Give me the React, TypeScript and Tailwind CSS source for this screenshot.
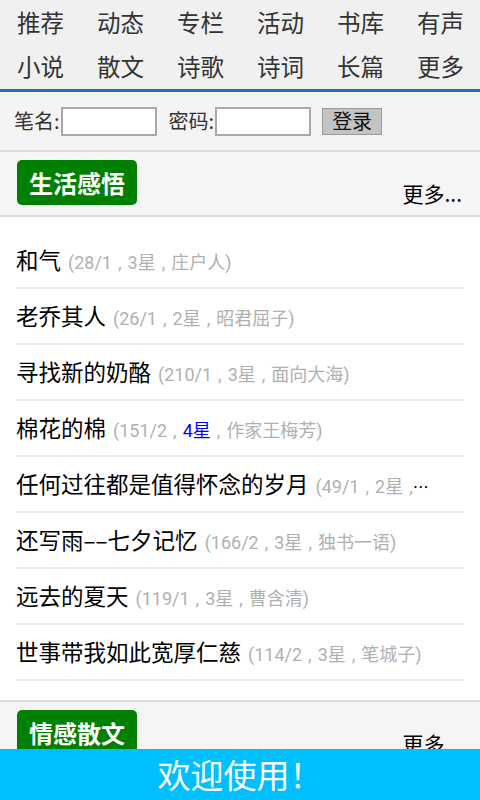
import React from "react";

type Article = {
  title: string;
  views: string;
  stars: string;
  author: string;
  hot?: boolean;
};

const NAV_ROWS: string[][] = [
  ["推荐", "动态", "专栏", "活动", "书库", "有声"],
  ["小说", "散文", "诗歌", "诗词", "长篇", "更多"],
];

const ARTICLES: Article[] = [
  { title: "和气", views: "28/1", stars: "3星", author: "庄户人" },
  { title: "老乔其人", views: "26/1", stars: "2星", author: "昭君屈子" },
  { title: "寻找新的奶酪", views: "210/1", stars: "3星", author: "面向大海" },
  { title: "棉花的棉", views: "151/2", stars: "4星", author: "作家王梅芳", hot: true },
  { title: "任何过往都是值得怀念的岁月", views: "49/1", stars: "2星", author: "夜雨寄北" },
  { title: "还写雨––七夕记忆", views: "166/2", stars: "3星", author: "独书一语" },
  { title: "远去的夏天", views: "119/1", stars: "3星", author: "曹含清" },
  { title: "世事带我如此宽厚仁慈", views: "114/2", stars: "3星", author: "笔城子" },
];

const CJK = "font-['Noto_Sans_CJK_SC',sans-serif]";
const META = "font-['Roboto','Noto_Sans_CJK_SC',sans-serif]";

function SectionHeader({ label }: { label: string }) {
  return (
    <div className="flex items-end justify-between bg-[#f5f5f5] pt-2 pb-[10px] pl-[17px] pr-[18px] border-t-2 border-[#dcdcdc]">
      <div className="h-[45px] w-[120px] rounded-[5px] bg-[#008000] flex items-center justify-center text-white text-[24px] font-bold leading-none">
        {label}
      </div>
      <div className="text-[21px] leading-none text-black pb-[1px]">更多...</div>
    </div>
  );
}

// comma in the meta line sits with a wide gap on both sides
const Sep = () => <span className="mx-[6px]">,</span>;

function ArticleRow({ item }: { item: Article }) {
  return (
    <div className="h-[56px] border-b-2 border-[#ececec] flex items-center">
      <div className="truncate w-[420px]">
        <span className="text-[22.5px] text-black">{item.title}</span>
        <span className={`${META} text-[18px] text-[#b0b0b0] ml-[7px]`}>
          ({item.views}
          <Sep />
          <span className={item.hot ? "text-[#0000ff]" : ""}>{item.stars}</span>
          <Sep />
          {item.author})
        </span>
      </div>
    </div>
  );
}

export default function App() {
  return (
    <div className={`${CJK} w-[480px] min-h-[800px] bg-[#f5f5f5] relative overflow-hidden`}>
      <nav className="bg-[#f0f0f0] pl-[17px] pt-[1px] border-b-[3px] border-[#1e6ec8]">
        {NAV_ROWS.map((row, i) => (
          <div key={i} className="grid grid-cols-[repeat(6,80px)] h-[44px] items-center">
            {row.map((name) => (
              <span key={name} className="text-[23.5px] text-[#333] leading-none">
                {name}
              </span>
            ))}
          </div>
        ))}
      </nav>

      <div className="bg-[#f4f4f4] h-[58px] flex items-center pl-[14px] text-[20px] text-[#333]">
        <span>笔名:</span>
        <input className="ml-[1px] w-[96px] h-[29px] bg-white border-2 border-[#a8a8a8] outline-none" />
        <span className="ml-[12px]">密码:</span>
        <input type="password" className="ml-[1px] w-[96px] h-[29px] bg-white border-2 border-[#a8a8a8] outline-none" />
        <button className="ml-[11px] w-[60px] h-[27px] bg-[#c4c4c4] border border-[#999] text-[20px] text-[#111] leading-none">
          登录
        </button>
      </div>

      <SectionHeader label="生活感悟" />

      <div className="bg-white border-t-2 border-[#dcdcdc] px-4 pt-4 pb-[19px]">
        {ARTICLES.map((item) => (
          <ArticleRow key={item.title} item={item} />
        ))}
      </div>

      <SectionHeader label="情感散文" />
      <div className="bg-white h-[200px]" />

      <div className="fixed left-0 bottom-0 w-[480px] h-[51px] bg-[#00bfff] flex items-center justify-center text-white text-[33px] leading-none">
        欢迎使用！
      </div>
    </div>
  );
}
